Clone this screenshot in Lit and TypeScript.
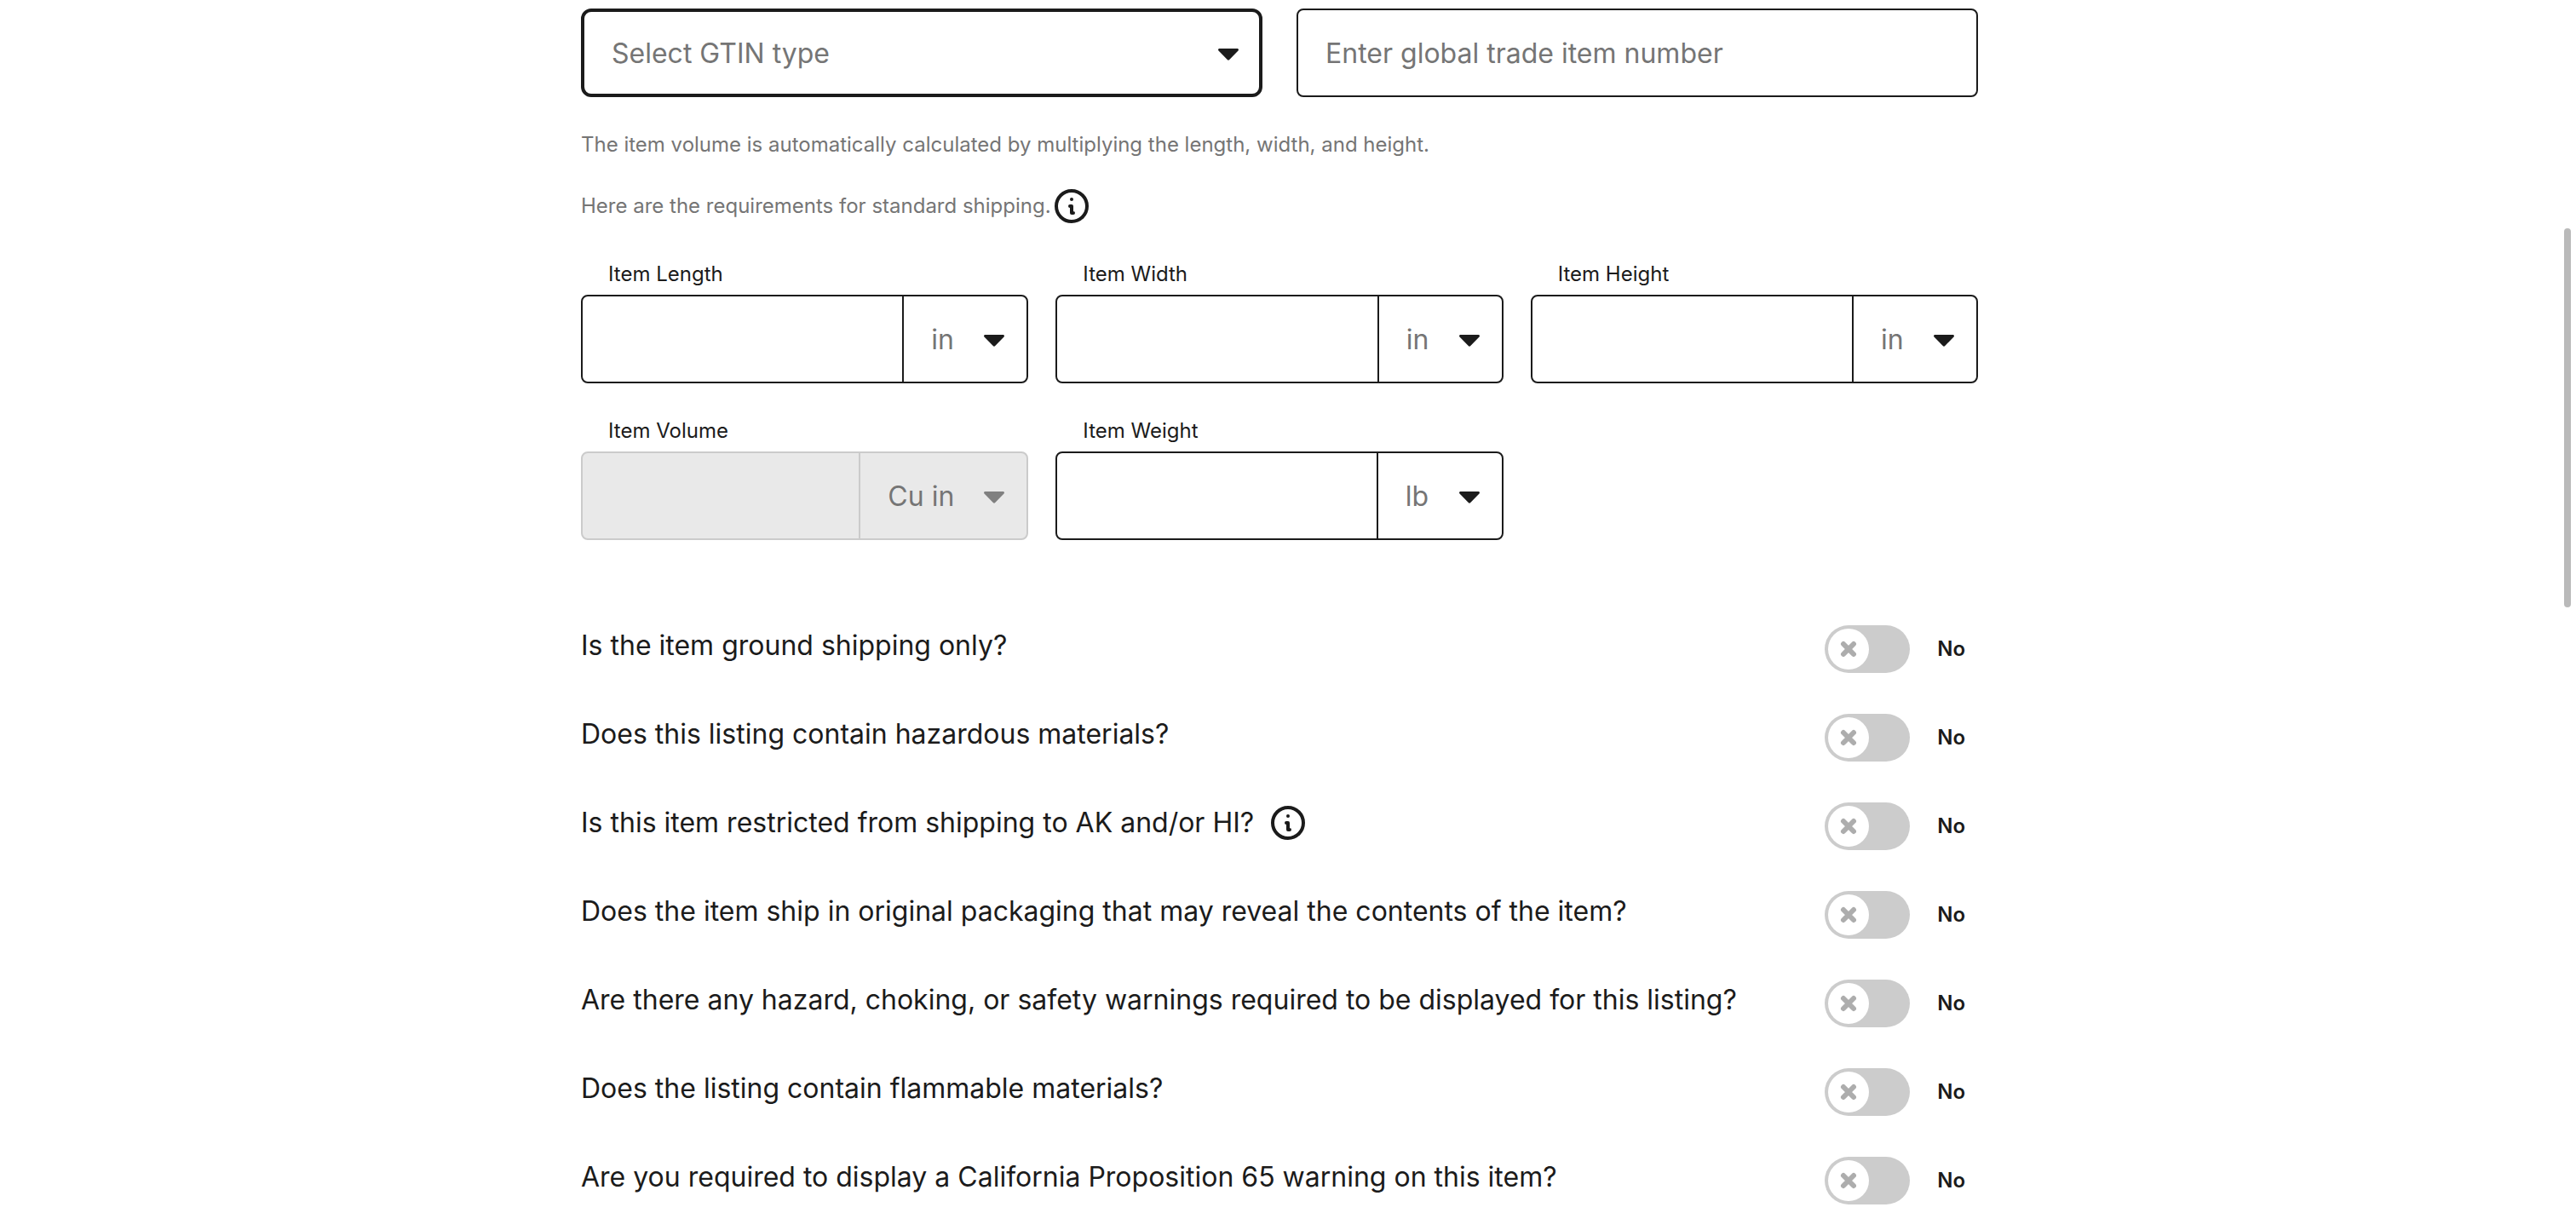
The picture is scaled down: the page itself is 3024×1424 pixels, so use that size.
import { LitElement, html, css, nothing } from "lit";
import { customElement, property } from "lit/decorators.js";

const infoIcon = html`<svg class="info-icon" viewBox="0 0 40 40" aria-hidden="true">
  <circle cx="20" cy="20" r="18" fill="none" stroke="currentColor" stroke-width="4" />
  <circle cx="20" cy="12" r="2" fill="currentColor" />
  <path d="M18 20h2v8h2" fill="none" stroke="currentColor" stroke-width="4"
    stroke-linecap="round" stroke-linejoin="round" />
</svg>`;

const caretIcon = html`<svg class="caret" viewBox="0 0 24 18" aria-hidden="true">
  <path d="M1.500 4h21c1.300 0 2 1.500 1 2.500L13 17.200c-.6.600-1.400.600-2 0L.5 6.500C-.5 5.500.2 4 1.500 4z" fill="currentColor" />
</svg>`;

interface Measure {
  id: string;
  label: string;
  unit: string;
  disabled?: boolean;
}

const measures: Measure[] = [
  { id: "length", label: "Item Length", unit: "in" },
  { id: "width", label: "Item Width", unit: "in" },
  { id: "height", label: "Item Height", unit: "in" },
  { id: "volume", label: "Item Volume", unit: "Cu in", disabled: true },
  { id: "weight", label: "Item Weight", unit: "lb" },
];

const questions: { text: string; info?: boolean }[] = [
  { text: "Is the item ground shipping only?" },
  { text: "Does this listing contain hazardous materials?" },
  { text: "Is this item restricted from shipping to AK and/or HI?", info: true },
  { text: "Does the item ship in original packaging that may reveal the contents of the item?" },
  { text: "Are there any hazard, choking, or safety warnings required to be displayed for this listing?" },
  { text: "Does the listing contain flammable materials?" },
  { text: "Are you required to display a California Proposition 65 warning on this item?" },
];

const shared = css`
  * {
    box-sizing: border-box;
  }
  input,
  select,
  button {
    margin: 0;
    font: inherit;
    color: inherit;
    border-radius: 0;
  }
  .select-wrap {
    display: grid;
    align-items: center;
  }
  .select-wrap > * {
    grid-area: 1 / 1;
  }
  .select {
    appearance: none;
    height: 100%;
    border: 0;
    outline: none;
    background: transparent;
    color: #757575;
    opacity: 1;
    padding: 0 85px 0 32px;
  }
  .caret {
    width: 24px;
    height: 18px;
    justify-self: end;
    pointer-events: none;
  }
  .info {
    display: block;
    padding: 0;
    border: 0;
    background: none;
    color: #1b1b1b;
    cursor: pointer;
  }
  .info-icon {
    display: block;
    width: 40px;
    height: 40px;
  }
`;

@customElement("measure-field")
export class MeasureField extends LitElement {
  @property({ attribute: false }) measure!: Measure;

  static styles = [
    shared,
    css`
      :host {
        display: block;
        min-width: 0;
      }
      .label {
        display: block;
        padding-left: 32px;
        font-size: 24px;
        line-height: 32px;
        margin-bottom: 8px;
      }
      .box {
        display: flex;
        height: 104px;
        border: 2px solid #1b1b1b;
        border-radius: 8px;
        overflow: hidden;
      }
      .value {
        flex: 1;
        min-width: 0;
        border: 0;
        outline: none;
        background: transparent;
        padding: 0 32px;
      }
      .unit {
        border-left: 2px solid #1b1b1b;
      }
      .caret {
        margin-right: 26px;
      }
      .box.disabled {
        background: #e9e9e9;
        border-color: #cbcbcb;
      }
      .disabled .unit {
        border-color: #cbcbcb;
      }
      .disabled .caret {
        color: #808080;
      }
    `,
  ];

  render() {
    const { id, label, unit, disabled = false } = this.measure;
    return html`
      <label class="label" for=${id}>${label}</label>
      <div class="box ${disabled ? "disabled" : ""}">
        <input class="value" id=${id} type="text" ?disabled=${disabled} />
        <div class="select-wrap unit">
          <select class="select" aria-label=${label} ?disabled=${disabled}>
            <option>${unit}</option>
          </select>
          ${caretIcon}
        </div>
      </div>
    `;
  }
}

@customElement("toggle-switch")
export class ToggleSwitch extends LitElement {
  @property() question = "";
  @property({ type: Boolean }) info = false;

  static styles = [
    shared,
    css`
      :host {
        display: flex;
        align-items: flex-start;
        justify-content: space-between;
        gap: 32px;
      }
      .prompt {
        display: flex;
        align-items: center;
        gap: 20px;
        line-height: 48px;
      }
      .answer {
        display: flex;
        align-items: center;
        gap: 32px;
        padding-right: 15px;
      }
      .switch {
        display: grid;
        align-items: center;
      }
      .switch > * {
        grid-area: 1 / 1;
      }
      .track {
        appearance: none;
        width: 100px;
        height: 56px;
        border-radius: 28px;
        background: #cccccc;
        cursor: pointer;
      }
      .thumb {
        width: 48px;
        height: 48px;
        margin-left: 4px;
        pointer-events: none;
      }
      .state {
        font-size: 24px;
        line-height: 32px;
        font-weight: 600;
      }
    `,
  ];

  render() {
    return html`
      <div class="prompt">
        <label for="toggle">${this.question}</label>
        ${this.info
          ? html`<button class="info" type="button" aria-label="More information">${infoIcon}</button>`
          : nothing}
      </div>
      <div class="answer">
        <div class="switch">
          <input class="track" id="toggle" type="checkbox" role="switch" />
          <svg class="thumb" viewBox="0 0 48 48" aria-hidden="true">
            <circle cx="24" cy="24" r="24" fill="#ffffff" />
            <path d="M18 18l12 12M30 18l-12 12" stroke="#adadad" stroke-width="6" stroke-linecap="round" />
          </svg>
        </div>
        <span class="state">No</span>
      </div>
    `;
  }
}

@customElement("app-root")
export class AppRoot extends LitElement {
  static styles = [
    shared,
    css`
      :host {
        display: flex;
        min-height: 100vh;
        background: #ffffff;
        color: #1b1b1b;
        font-family: Inter, "Liberation Sans", sans-serif;
        font-size: 32px;
      }
      .page {
        flex: 1;
        min-width: 0;
        padding: 10px 24px;
      }
      .form {
        max-width: 1640px;
        margin: 0 auto;
      }
      .gtin {
        display: grid;
        grid-template-columns: 1fr 1fr;
        gap: 40px;
      }
      .gtin-type,
      .gtin-number {
        height: 104px;
        border: 2px solid #1b1b1b;
        border-radius: 8px;
      }
      .gtin-type {
        border-width: 4px;
        border-radius: 12px;
      }
      .gtin-type .caret {
        margin-right: 24px;
      }
      .gtin-number {
        width: 100%;
        outline: none;
        padding: 0 32px;
      }
      .gtin-number::placeholder {
        color: #757575;
        opacity: 1;
      }
      .notes {
        margin: 36px 0 44px;
        display: grid;
        gap: 32px;
        font-size: 24px;
        line-height: 40px;
        color: #757575;
      }
      .note {
        display: flex;
        align-items: center;
        gap: 4px;
        margin: 0;
      }
      .measures {
        display: grid;
        grid-template-columns: repeat(3, 1fr);
        gap: 40px 32px;
      }
      .questions {
        display: grid;
        gap: 48px;
        margin-top: 100px;
      }
      .rail {
        width: 20px;
        padding: 268px 6px 0;
      }
      .rail-thumb {
        height: 445px;
        border-radius: 4px;
        background: #bababa;
      }
    `,
  ];

  render() {
    return html`
      <main class="page">
        <form class="form">
          <div class="gtin">
            <div class="select-wrap gtin-type">
              <select class="select" aria-label="GTIN type">
                <option>Select GTIN type</option>
              </select>
              ${caretIcon}
            </div>
            <input
              class="gtin-number"
              type="text"
              aria-label="Global trade item number"
              placeholder="Enter global trade item number"
            />
          </div>
          <div class="notes">
            <p class="note">
              The item volume is automatically calculated by multiplying the length, width, and height.
            </p>
            <p class="note">
              <span>Here are the requirements for standard shipping.</span>
              <button class="info" type="button" aria-label="Shipping requirements">${infoIcon}</button>
            </p>
          </div>
          <div class="measures">
            ${measures.map((m) => html`<measure-field .measure=${m}></measure-field>`)}
          </div>
          <div class="questions">
            ${questions.map(
              (q) => html`<toggle-switch .question=${q.text} ?info=${q.info ?? false}></toggle-switch>`,
            )}
          </div>
        </form>
      </main>
      <div class="rail"><div class="rail-thumb"></div></div>
    `;
  }
}
